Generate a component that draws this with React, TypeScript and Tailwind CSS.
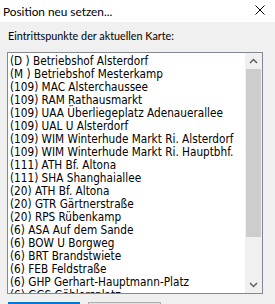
import React from "react";

const items = [
  "(D ) Betriebshof Alsterdorf",
  "(M ) Betriebshof Mesterkamp",
  "(109) MAC Alsterchaussee",
  "(109) RAM Rathausmarkt",
  "(109) UAA Überliegeplatz Adenauerallee",
  "(109) UAL U Alsterdorf",
  "(109) WIM Winterhude Markt Ri. Alsterdorf",
  "(109) WIM Winterhude Markt Ri. Hauptbhf.",
  "(111) ATH Bf. Altona",
  "(111) SHA Shanghaiallee",
  "(20) ATH Bf. Altona",
  "(20) GTR Gärtnerstraße",
  "(20) RPS Rübenkamp",
  "(6) ASA Auf dem Sande",
  "(6) BOW U Borgweg",
  "(6) BRT Brandstwiete",
  "(6) FEB Feldstraße",
  "(6) GHP Gerhart-Hauptmann-Platz",
  "(6) GGS Gählersplatz",
];

export default function App() {
  return (
    <div className="w-[275px] h-[304px] bg-[#f0f0f0] overflow-hidden text-black" style={{ fontFamily: 'Lato, "Noto Sans", sans-serif' }}>
      <div className="h-[22px] bg-white flex items-center justify-between pl-[3px] pr-[10px]">
        <span className="text-[11.8px] leading-[15px]">Position neu setzen...</span>
        <svg width="10" height="10" viewBox="0 0 10 10" className="mt-[-2px]">
          <path d="M0.5 0.5 L9.5 9.5 M9.5 0.5 L0.5 9.5" stroke="#000" strokeWidth="1" />
        </svg>
      </div>
      <div className="pl-[7px] pt-[6px]">
        <div className="text-[10.8px] leading-[15px] pl-[1px]">Eintrittspunkte der aktuellen Karte:</div>
        <div className="mt-[9px] w-[256px] h-[242px] border border-[#828790] bg-white flex">
          <div className="flex-1 overflow-hidden pt-[2px] pl-[2px]" style={{ fontFamily: '"DejaVu Sans Condensed", "Liberation Sans", sans-serif' }}>
            {items.map((t, i) => (
              <div key={i} className="h-[13px] leading-[13px] text-[11.7px] whitespace-nowrap">{t}</div>
            ))}
          </div>
          <div className="w-[17px] bg-[#f0f0f0] flex flex-col">
            <div className="h-[16px] flex items-center justify-center">
              <svg width="9" height="6" viewBox="0 0 9 6"><path d="M1 5 L4.5 1.5 L8 5" stroke="#606060" strokeWidth="1.5" fill="none" /></svg>
            </div>
            <div className="mx-[1px] h-[168px] bg-[#cdcdcd]" />
            <div className="flex-1" />
            <div className="h-[16px] flex items-center justify-center">
              <svg width="9" height="6" viewBox="0 0 9 6"><path d="M1 1 L4.5 4.5 L8 1" stroke="#606060" strokeWidth="1.5" fill="none" /></svg>
            </div>
          </div>
        </div>
        <div className="mt-[8px] flex gap-[8px] pl-[1px]">
          <div className="w-[72px] h-[23px] border-2 border-[#0078d7] bg-[#e1e1e1]" />
          <div className="w-[73px] h-[23px] border border-[#adadad] bg-[#e1e1e1]" />
        </div>
      </div>
    </div>
  );
}
